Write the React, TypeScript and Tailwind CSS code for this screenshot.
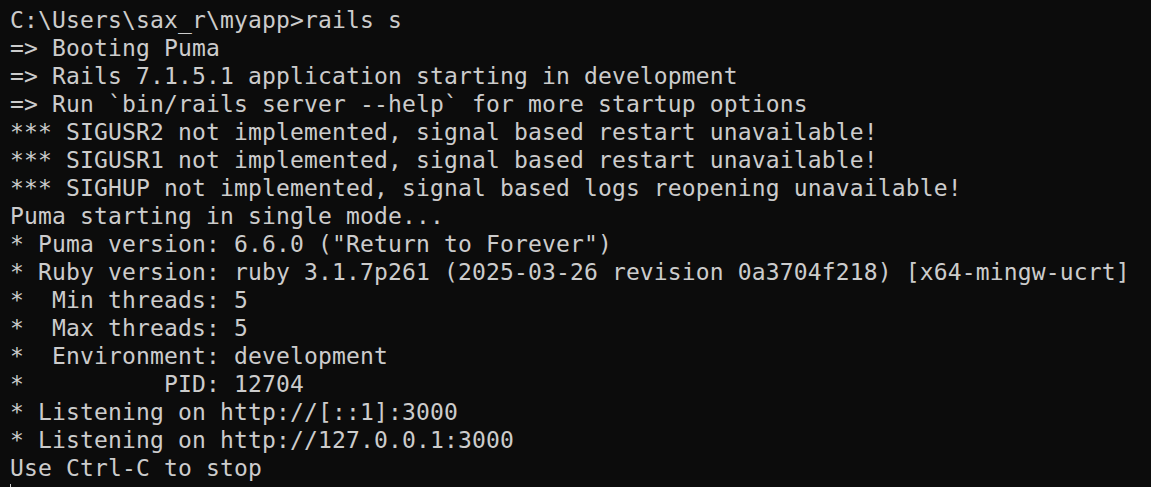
import React from "react";

const lines = [
  "C:\\Users\\sax_r\\myapp>rails s",
  "=> Booting Puma",
  "=> Rails 7.1.5.1 application starting in development",
  "=> Run `bin/rails server --help` for more startup options",
  "*** SIGUSR2 not implemented, signal based restart unavailable!",
  "*** SIGUSR1 not implemented, signal based restart unavailable!",
  "*** SIGHUP not implemented, signal based logs reopening unavailable!",
  "Puma starting in single mode...",
  '* Puma version: 6.6.0 ("Return to Forever")',
  "* Ruby version: ruby 3.1.7p261 (2025-03-26 revision 0a3704f218) [x64-mingw-ucrt]",
  "*  Min threads: 5",
  "*  Max threads: 5",
  "*  Environment: development",
  "*          PID: 12704",
  "* Listening on http://[::1]:3000",
  "* Listening on http://127.0.0.1:3000",
  "Use Ctrl-C to stop",
];

export default function App() {
  return (
    <div className="w-[1151px] h-[487px] overflow-hidden bg-[#0c0c0c] text-[#cccccc] pl-[10px] pt-[6px] font-['DejaVu_Sans_Mono','Liberation_Mono',monospace] text-[23px] leading-[28px] tracking-[0.15px]">
      {lines.map((l, i) => (
        <div key={i} className="whitespace-pre">
          {l}
        </div>
      ))}
      <div className="h-[28px] flex">
        <div className="w-[1px] h-[24px] mt-[2px] bg-[#cccccc]" />
      </div>
    </div>
  );
}
